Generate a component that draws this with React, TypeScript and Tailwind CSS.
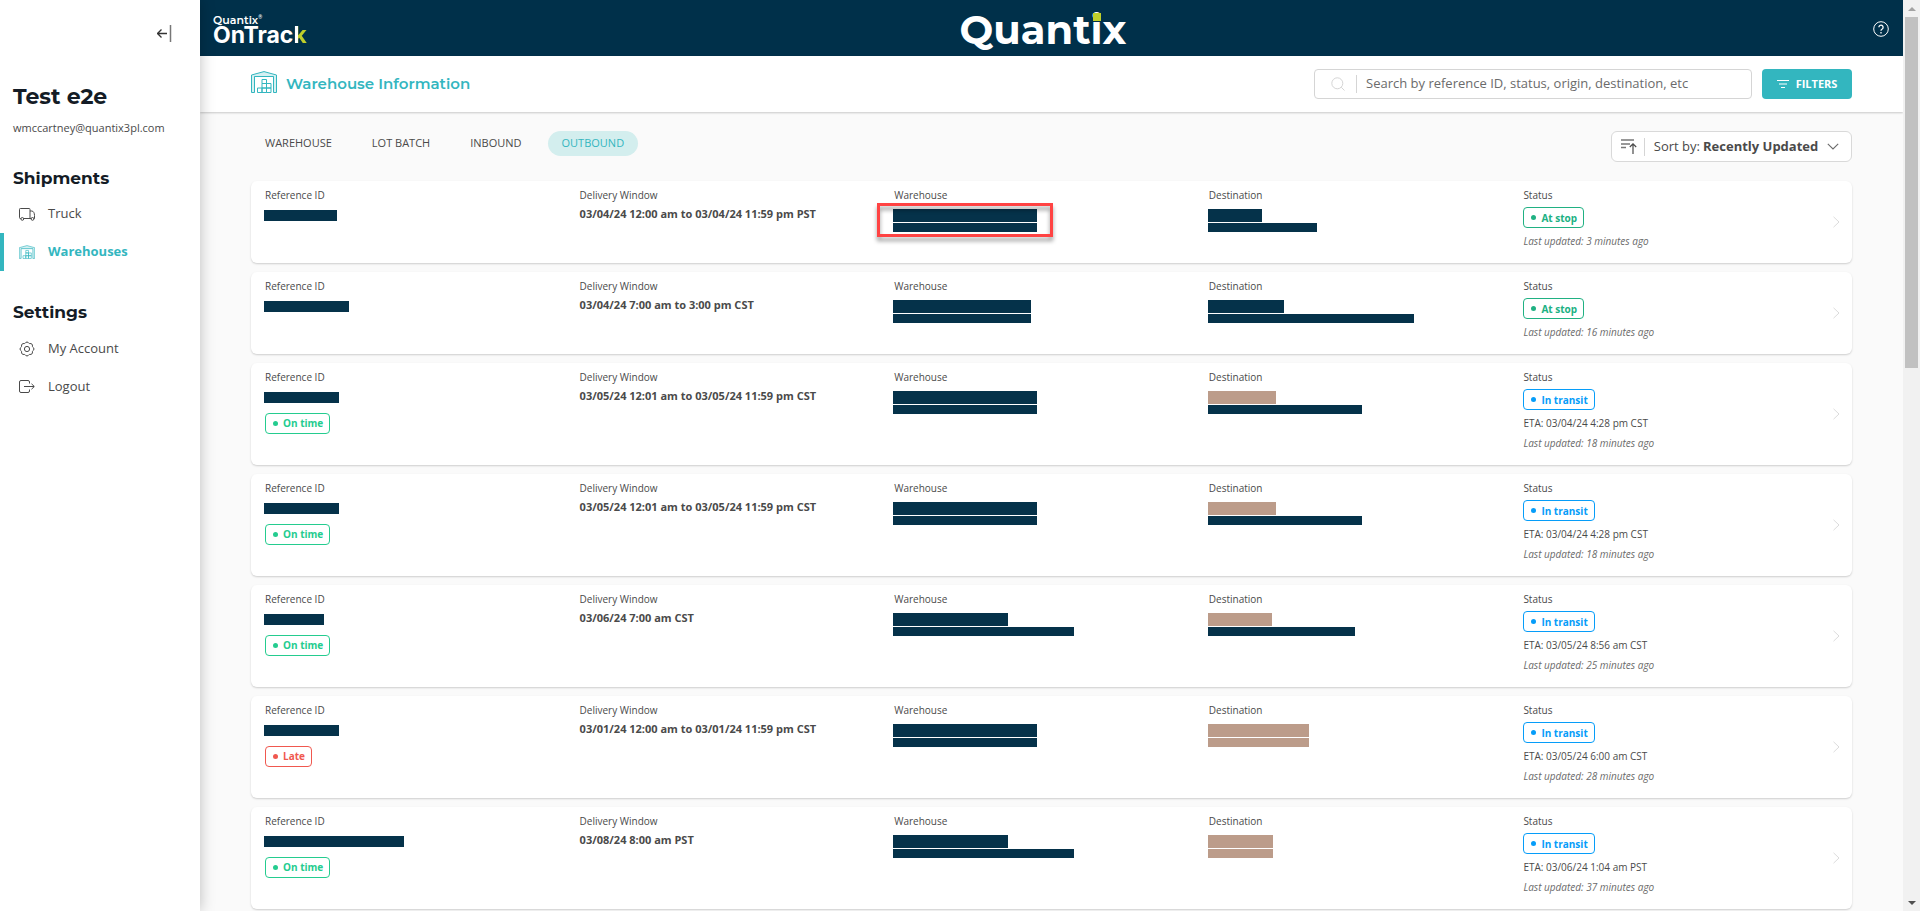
import React, { useState } from "react";
import clsx from "clsx";

type Tone = "navy" | "tan";

interface Bar {
  width: number;
  tone?: Tone;
}

interface Shipment {
  id: number;
  reference: number;
  timing?: "On time" | "Late";
  window: string;
  warehouse: Bar[];
  destination: Bar[];
  status: "At stop" | "In transit";
  eta?: string;
  updated: string;
  highlighted?: boolean;
}

const shipments: Shipment[] = [
  {
    id: 1,
    reference: 73,
    window: "03/04/24 12:00 am to 03/04/24 11:59 pm PST",
    warehouse: [{ width: 144 }, { width: 144 }],
    destination: [{ width: 54 }, { width: 109 }],
    status: "At stop",
    updated: "3 minutes ago",
    highlighted: true,
  },
  {
    id: 2,
    reference: 85,
    window: "03/04/24 7:00 am to 3:00 pm CST",
    warehouse: [{ width: 138 }, { width: 138 }],
    destination: [{ width: 76 }, { width: 206 }],
    status: "At stop",
    updated: "16 minutes ago",
  },
  {
    id: 3,
    reference: 75,
    timing: "On time",
    window: "03/05/24 12:01 am to 03/05/24 11:59 pm CST",
    warehouse: [{ width: 144 }, { width: 144 }],
    destination: [{ width: 68, tone: "tan" }, { width: 154 }],
    status: "In transit",
    eta: "03/04/24 4:28 pm CST",
    updated: "18 minutes ago",
  },
  {
    id: 4,
    reference: 75,
    timing: "On time",
    window: "03/05/24 12:01 am to 03/05/24 11:59 pm CST",
    warehouse: [{ width: 144 }, { width: 144 }],
    destination: [{ width: 68, tone: "tan" }, { width: 154 }],
    status: "In transit",
    eta: "03/04/24 4:28 pm CST",
    updated: "18 minutes ago",
  },
  {
    id: 5,
    reference: 60,
    timing: "On time",
    window: "03/06/24 7:00 am CST",
    warehouse: [{ width: 115 }, { width: 181 }],
    destination: [{ width: 64, tone: "tan" }, { width: 147 }],
    status: "In transit",
    eta: "03/05/24 8:56 am CST",
    updated: "25 minutes ago",
  },
  {
    id: 6,
    reference: 75,
    timing: "Late",
    window: "03/01/24 12:00 am to 03/01/24 11:59 pm CST",
    warehouse: [{ width: 144 }, { width: 144 }],
    destination: [{ width: 101, tone: "tan" }, { width: 101, tone: "tan" }],
    status: "In transit",
    eta: "03/05/24 6:00 am CST",
    updated: "28 minutes ago",
  },
  {
    id: 7,
    reference: 140,
    timing: "On time",
    window: "03/08/24 8:00 am PST",
    warehouse: [{ width: 115 }, { width: 181 }],
    destination: [{ width: 65, tone: "tan" }, { width: 65, tone: "tan" }],
    status: "In transit",
    eta: "03/06/24 1:04 am PST",
    updated: "37 minutes ago",
  },
];

const tabs = ["WAREHOUSE", "LOT BATCH", "INBOUND", "OUTBOUND"];

const WarehouseIcon = ({ className }: { className?: string }) => (
  <svg viewBox="0 0 26 22" fill="none" stroke="currentColor" className={className} aria-hidden="true">
    <path d="M.5 21.500V4L13 .6 25.500 4v17.500h-3V5.500h-19v16z" fill="#33b6bf" fillOpacity=".2" />
    <path d="M3.500 5.500h19" strokeOpacity=".5" />
    <path d="M6.500 17h4.500v4.500H6.500zM11 17h4.500v4.500H11zM15.500 17H20v4.500h-4.500zM11 12.500h4.500V17H11zM15.500 12.500H20V17h-4.500zM11 8.500h4.500v4H11z" />
  </svg>
);

const TruckIcon = () => (
  <svg viewBox="0 0 16 13" fill="none" stroke="currentColor" className="h-[13px] w-4" aria-hidden="true">
    <path d="M2 10.500H1.300A.8.800 0 0 1 .5 9.700V1.300A.8.800 0 0 1 1.300.5h8.900a.8.800 0 0 1 .8.800v9.200H4.500M11 3h1.800c1.700 0 2.700 2.200 2.700 4.500v3h-.7M11 10.500h1.300" />
    <circle cx="3.300" cy="10.900" r="1.400" />
    <circle cx="13.500" cy="10.900" r="1.400" />
  </svg>
);

const GearIcon = () => (
  <svg viewBox="0 0 16 16" fill="none" stroke="currentColor" strokeLinejoin="round" className="size-4" aria-hidden="true">
    <path d="M6.200 2.200a2 2 0 0 1 3.600 0 2 2 0 0 0 1.100.4 2 2 0 0 1 2.500 2.500 2 2 0 0 0 .4 1.100 2 2 0 0 1 0 3.600 2 2 0 0 0-.4 1.100 2 2 0 0 1-2.500 2.500 2 2 0 0 0-1.100.4 2 2 0 0 1-3.600 0 2 2 0 0 0-1.100-.4 2 2 0 0 1-2.500-2.500 2 2 0 0 0-.4-1.100 2 2 0 0 1 0-3.600 2 2 0 0 0 .4-1.100 2 2 0 0 1 2.500-2.500 2 2 0 0 0 1.100-.4z" />
    <circle cx="8" cy="8" r="2.600" />
  </svg>
);

const LogoutIcon = () => (
  <svg viewBox="0 0 16 14" fill="none" stroke="currentColor" className="h-3.5 w-4" aria-hidden="true">
    <path d="M10.500 3.500V2A1.500 1.500 0 0 0 9 .5H2A1.500 1.500 0 0 0 .5 2v9A1.500 1.500 0 0 0 2 12.500h7a1.500 1.500 0 0 0 1.500-1.500V9.500M5 6.500h10M12.500 3.800l2.800 2.700-2.800 2.700" />
  </svg>
);

const ProductLogo = () => (
  <a href="#" className="w-fit pt-1 whitespace-nowrap text-white">
    <span className="block font-[Montserrat,Inter,sans-serif] text-[11px] leading-[10px] font-semibold">
      Quantix<span className="align-top text-[5px] leading-none">®</span>
    </span>
    <span className="block font-[Inter,sans-serif] text-[23px] leading-5 font-bold">
      OnTrac
      <span className="bg-[linear-gradient(90deg,#ffffff_34%,#bfce2a_34%)] bg-clip-text text-transparent">k</span>
    </span>
  </a>
);

const BrandLogo = () => (
  <div className="pt-1 pr-4 font-[Montserrat,Inter,sans-serif] text-[40px] leading-none font-bold text-white">
    Quant
    <span className="relative">
      i
      <span className="absolute top-2 left-1/2 size-2 -translate-x-1/2 bg-[#bfce2a]" />
    </span>
    x
  </div>
);

const Badge = ({ label }: { label: string }) => (
  <span
    className={clsx(
      "flex h-[21px] w-fit items-center gap-[5px] rounded border pr-1.5 pl-[7px] text-[10px] font-bold",
      label === "At stop" && "border-[#20b183] text-[#20b183]",
      label === "On time" && "border-[#24cc8f] text-[#24cc8f]",
      label === "In transit" && "border-[#069df9] text-[#069df9]",
      label === "Late" && "border-[#f0584f] text-[#f0584f]"
    )}
  >
    <span className="size-[5px] rounded-full bg-current" />
    {label}
  </span>
);

const Bars = ({ bars, highlighted }: { bars: Bar[]; highlighted?: boolean }) => (
  <div className="relative mt-[7px] -ml-px w-fit space-y-px">
    {bars.map((bar, i) => (
      <div
        key={i}
        className={clsx(i === 0 ? "h-[13px]" : "h-[9px]", bar.tone === "tan" ? "bg-[#bc9c8a]" : "bg-[#05324a]")}
        style={{ width: bar.width }}
      />
    ))}
    {highlighted && (
      <div className="absolute -inset-x-4 -top-1.5 -bottom-[5px] border-3 border-[#ff4343] drop-shadow-[0_4px_2px_rgba(0,0,0,0.4)]" />
    )}
  </div>
);

const Field = ({ label, children }: { label: string; children: React.ReactNode }) => (
  <div className="min-w-0">
    <dt className="text-[10px] leading-[14px]">{label}</dt>
    <dd>{children}</dd>
  </div>
);

const ShipmentCard = ({ shipment }: { shipment: Shipment }) => (
  <li className="relative rounded-md bg-white px-3.5 pt-[7px] pb-[15px] shadow-[0_1px_2px_rgba(0,0,0,0.18)]">
    <dl className="grid grid-cols-5">
      <Field label="Reference ID">
        <div className="mt-2 -ml-px h-[11px] bg-[#05324a]" style={{ width: shipment.reference }} />
        {shipment.timing && (
          <div className="mt-2.5">
            <Badge label={shipment.timing} />
          </div>
        )}
      </Field>
      <Field label="Delivery Window">
        <p className="mt-1 text-[11px] leading-4 font-bold">{shipment.window}</p>
      </Field>
      <Field label="Warehouse">
        <Bars bars={shipment.warehouse} highlighted={shipment.highlighted} />
      </Field>
      <Field label="Destination">
        <Bars bars={shipment.destination} />
      </Field>
      <Field label="Status">
        <div className="mt-[5px] space-y-[6px] text-[10px] leading-[14px]">
          <Badge label={shipment.status} />
          {shipment.eta && <p className="whitespace-nowrap">ETA: {shipment.eta}</p>}
          <p className="whitespace-nowrap text-[#6b6b6b] italic">Last updated: {shipment.updated}</p>
        </div>
      </Field>
    </dl>
    <a href="#" aria-label="Open shipment" className="absolute inset-y-0 right-3 flex items-center text-[#dcdcdc]">
      <svg viewBox="0 0 7 12" fill="none" stroke="currentColor" className="h-3 w-[7px]" aria-hidden="true">
        <path d="m.5.800 5.500 5.200-5.500 5.200" />
      </svg>
    </a>
  </li>
);

interface NavItemProps {
  icon: React.ReactNode;
  label: string;
  active?: boolean;
}

const NavItem = ({ icon, label, active }: NavItemProps) => (
  <li>
    <a
      href="#"
      className={clsx(
        "flex h-[38px] items-center gap-[13px] border-l-4 pl-[15px] text-[13px]",
        active ? "border-[#33b6bf] font-bold text-[#33b6bf]" : "border-transparent"
      )}
    >
      {icon}
      {label}
    </a>
  </li>
);

const Sidebar = () => (
  <aside className="relative z-10 w-[200px] shrink-0 bg-white shadow-[0_0_14px_rgba(0,0,0,0.25)]">
    <div className="flex justify-end pt-[25px] pr-7">
      <button aria-label="Collapse menu" className="text-[#333]">
        <svg viewBox="0 0 15 17" fill="none" stroke="currentColor" className="h-[17px] w-[15px]" aria-hidden="true">
          <path d="M10 8.500H1M4.500 4.500l-4 4 4 4" strokeWidth="1.300" />
          <path d="M13.500 0v17" strokeWidth="1.500" stroke="#777" />
        </svg>
      </button>
    </div>
    <h1 className="mt-10 pl-[13px] font-[Montserrat,Inter,sans-serif] text-[22px] leading-[30px] font-bold text-[#141c26]">
      Test e2e
    </h1>
    <p className="mt-2 pl-[13px] text-[11px] leading-4">wmccartney@quantix3pl.com</p>
    <nav>
      <h2 className="mt-[30px] mb-[5px] pl-[13px] font-[Montserrat,Inter,sans-serif] text-[17px] leading-6 font-bold text-[#141c26]">
        Shipments
      </h2>
      <ul>
        <NavItem icon={<TruckIcon />} label="Truck" />
        <NavItem icon={<WarehouseIcon className="h-3.5 w-4" />} label="Warehouses" active />
      </ul>
      <h2 className="mt-[29px] mb-1.5 pl-[13px] font-[Montserrat,Inter,sans-serif] text-[17px] leading-6 font-bold text-[#141c26]">
        Settings
      </h2>
      <ul>
        <NavItem icon={<GearIcon />} label="My Account" />
        <NavItem icon={<LogoutIcon />} label="Logout" />
      </ul>
    </nav>
  </aside>
);

const Scrollbar = () => (
  <div className="flex w-[17px] shrink-0 flex-col items-center justify-between bg-[#f1f1f1]" aria-hidden="true">
    <div className="flex h-[17px] items-center">
      <div className="border-x-4 border-b-4 border-x-transparent border-b-[#a3a3a3]" />
    </div>
    <div className="w-[13px] flex-1">
      <div className="h-2/5 bg-[#c1c1c1]" />
    </div>
    <div className="flex h-[17px] items-center">
      <div className="border-x-4 border-t-4 border-x-transparent border-t-[#505050]" />
    </div>
  </div>
);

const App = () => {
  const [activeTab, setActiveTab] = useState("OUTBOUND");
  const [search, setSearch] = useState("");

  return (
    <div className="flex h-screen overflow-hidden bg-[#fafafa] font-['Open_Sans',sans-serif] text-[#4a4a4a]">
      <Sidebar />
      <div className="flex min-w-0 flex-1 flex-col">
        <header className="grid h-14 shrink-0 grid-cols-[1fr_auto_1fr] items-center bg-[#00304a] pr-3.5 pl-[13px]">
          <ProductLogo />
          <BrandLogo />
          <button aria-label="Help" className="justify-self-end pt-0.5">
            <svg viewBox="0 0 16 16" fill="none" stroke="#fff" className="size-4" aria-hidden="true">
              <circle cx="8" cy="8" r="7.300" />
              <path d="M5.900 6.300a2.100 2.100 0 1 1 3.300 1.700C8.400 8.500 8 8.900 8 9.800M8 11v1.400" strokeWidth="1.300" />
            </svg>
          </button>
        </header>

        <div className="flex h-14 shrink-0 items-center bg-white px-[51px] shadow-[0_1px_2px_rgba(0,0,0,0.2)]">
          <WarehouseIcon className="mb-1 h-[22px] w-[26px] text-[#33b6bf]" />
          <h2 className="ml-[9px] font-[Montserrat,Inter,sans-serif] text-[15px] font-semibold text-[#33b6bf]">
            Warehouse Information
          </h2>
          <label className="ml-auto flex h-[30px] w-[438px] items-center rounded border border-[#d5d5d5] pl-4">
            <svg viewBox="0 0 14 14" fill="none" stroke="#d5d5d5" className="size-3.5" aria-hidden="true">
              <circle cx="6.300" cy="6.300" r="5.500" />
              <path d="m10.200 10.200 3.300 3.300" />
            </svg>
            <span className="ml-[11px] h-[18px] border-l border-[#d5d5d5]" />
            <input
              type="text"
              aria-label="Search shipments"
              value={search}
              onChange={(e) => setSearch(e.target.value)}
              placeholder="Search by reference ID, status, origin, destination, etc"
              className="ml-[9px] min-w-0 flex-1 text-[13px] placeholder:text-[#6b6b6b] focus:outline-none"
            />
          </label>
          <button className="ml-2.5 flex h-[30px] w-[90px] items-center justify-center gap-[7px] rounded bg-[#33b6bf] text-[11px] font-bold text-white">
            <svg viewBox="0 0 12 8" fill="none" stroke="currentColor" className="h-2 w-3" aria-hidden="true">
              <path d="M0 .5h12M2 4h8M4 7.500h4" />
            </svg>
            FILTERS
          </button>
        </div>

        <main className="px-[51px] pt-[19px]">
          <div className="flex items-start justify-between">
            <div className="flex gap-3" role="tablist">
              {tabs.map((tab) => (
                <button
                  key={tab}
                  role="tab"
                  aria-selected={tab === activeTab}
                  onClick={() => setActiveTab(tab)}
                  className={clsx(
                    "h-[25px] rounded-full px-3.5 text-[11px] font-medium",
                    tab === activeTab && "bg-[#d3eeee] text-[#33b6bf]"
                  )}
                >
                  {tab}
                </button>
              ))}
            </div>
            <div className="flex h-[31px] items-center rounded-md border border-[#d9d9d9] bg-white pr-3 pl-[9px] text-[13px]">
              <svg viewBox="0 0 16 15" fill="none" stroke="#4a4a4a" className="h-[15px] w-4" aria-hidden="true">
                <path d="M0 1h13M0 5h9M0 8.500h5" stroke="#777" strokeWidth="1.300" />
                <path d="M12 15V5M8.800 8 12 4.800 15.200 8" strokeWidth="1.200" />
              </svg>
              <span className="mr-[9px] ml-[7px] h-[18px] border-l border-[#d5d5d5]" />
              <label htmlFor="sort">Sort by:</label>
              <select id="sort" className="ml-[3px] appearance-none font-bold focus:outline-none">
                <option>Recently Updated</option>
              </select>
              <svg viewBox="0 0 12 7" fill="none" stroke="#6b6b6b" className="ml-2 h-[7px] w-3" aria-hidden="true">
                <path d="m.8.800 5.200 5.200L11.200.800" strokeWidth="1.100" />
              </svg>
            </div>
          </div>

          <ul className="mt-[19px] space-y-[9px]">
            {shipments.map((shipment) => (
              <ShipmentCard key={shipment.id} shipment={shipment} />
            ))}
          </ul>
        </main>
      </div>
      <Scrollbar />
    </div>
  );
};

export default App;
